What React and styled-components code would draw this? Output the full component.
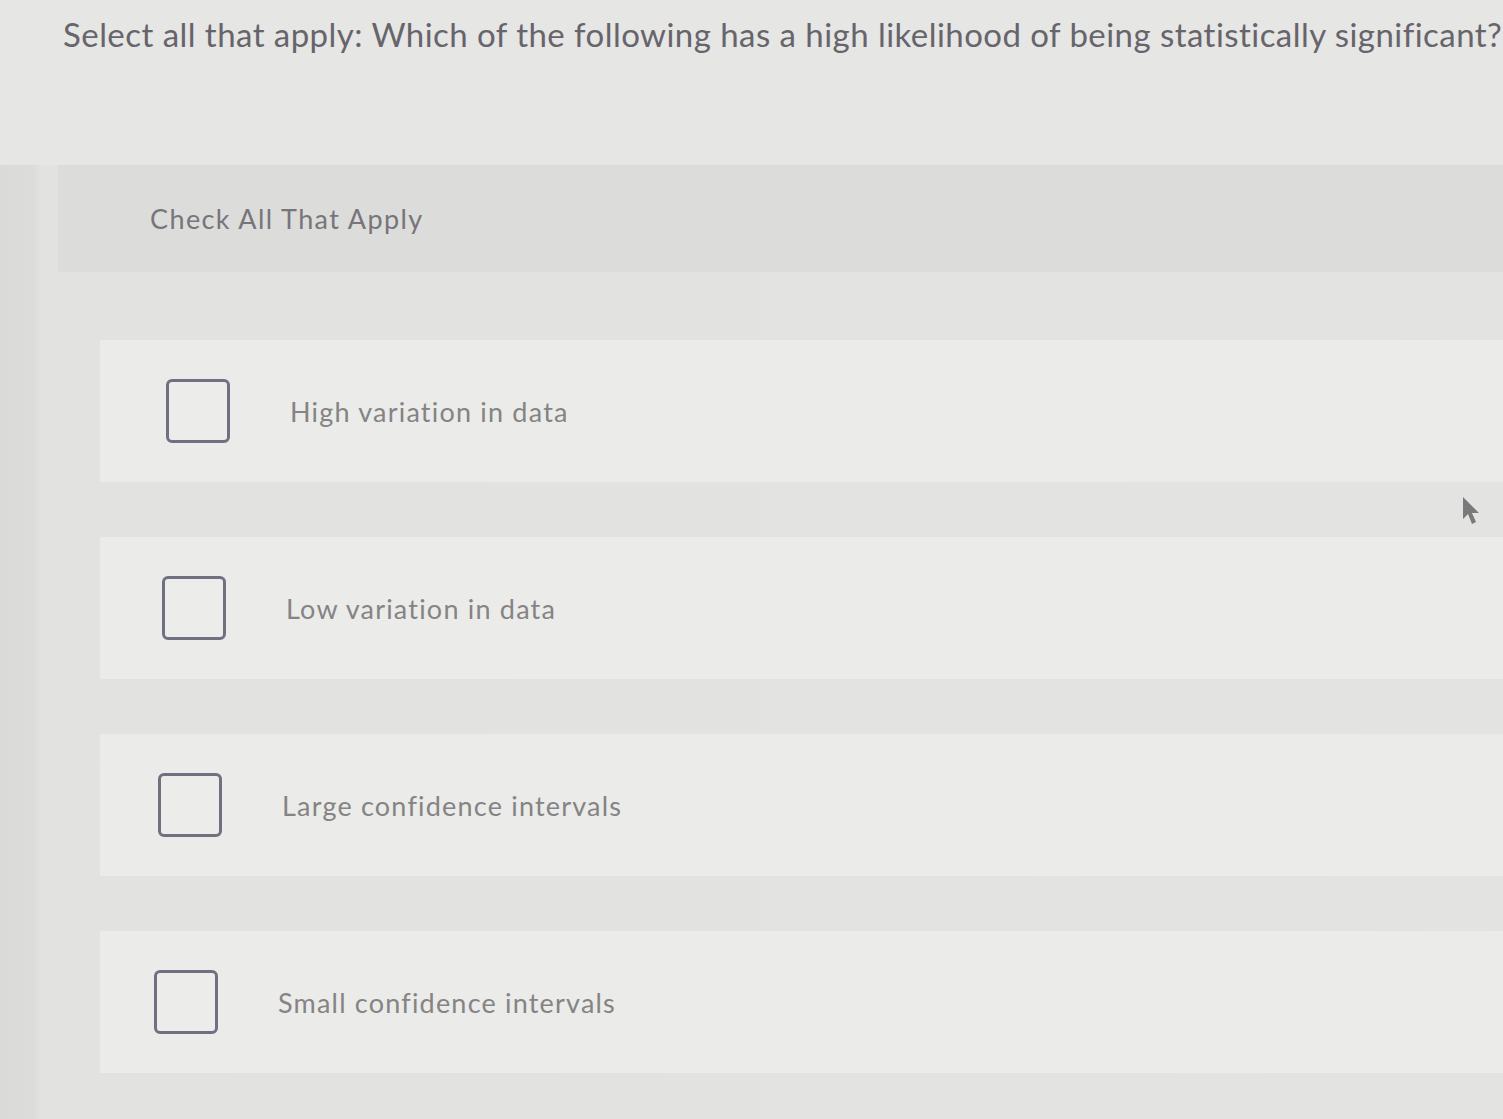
import React from "react";
import styled, { createGlobalStyle } from "styled-components";

const GlobalStyle = createGlobalStyle`
  html, body {
    margin: 0;
    padding: 0;
    background: #e2e2e0;
    font-family: "Lato", "Open Sans", "Liberation Sans", sans-serif;
    overflow: hidden;
  }
`;

const Page = styled.div`
  position: relative;
  width: 1503px;
  height: 1119px;
  overflow: hidden;
  background: linear-gradient(90deg, #dadad8 0px, #dcdcda 34px, #e2e2e0 40px, #e3e3e1 100%);
`;

const Question = styled.div`
  height: 165px;
  box-sizing: border-box;
  padding: 14px 0 0 63px;
  background: #e6e6e4;
  white-space: nowrap;
  font-size: 33px;
  letter-spacing: 0.45px;
  color: #67646b;
`;

const Panel = styled.section`
  margin-left: 58px;
`;

const PanelHeader = styled.div`
  height: 107px;
  box-sizing: border-box;
  display: flex;
  align-items: center;
  padding: 0 0 0 92px;
  background: #dcdcda;
  font-size: 27px;
  letter-spacing: 1.4px;
  color: #77757a;
`;

const OptionList = styled.div`
  display: flex;
  flex-direction: column;
  gap: 55px;
  padding: 68px 0 0 62px;
  margin-left: -20px;
`;

const Option = styled.label`
  display: flex;
  align-items: center;
  gap: 60px;
  height: 142px;
  box-sizing: border-box;
  padding-left: ${(p) => p.$indent}px;
  background: #ebebe9;
  font-size: 27px;
  letter-spacing: 1.2px;
  color: #858384;
  cursor: pointer;
`;

const Box = styled.span`
  width: 58px;
  height: 58px;
  flex: none;
  border: 3px solid #6f7181;
  border-radius: 6px;
  background: #ececea;
`;

const Cursor = styled.svg`
  position: absolute;
  left: 1461px;
  top: 495px;
`;

const options = [
  { text: "High variation in data", indent: 66 },
  { text: "Low variation in data", indent: 62 },
  { text: "Large confidence intervals", indent: 58 },
  { text: "Small confidence intervals", indent: 54 },
];

export default function App() {
  return (
    <Page>
      <GlobalStyle />
      <Question>
        Select all that apply: Which of the following has a high likelihood of
        being statistically significant?
      </Question>
      <Panel>
        <PanelHeader>Check All That Apply</PanelHeader>
        <OptionList>
          {options.map((o) => (
            <Option key={o.text} $indent={o.indent}>
              <Box />
              <span>{o.text}</span>
            </Option>
          ))}
        </OptionList>
      </Panel>
      <Cursor width="22" height="34" viewBox="0 0 22 34">
        <path d="M2 2 L2 24 L7 19 L11 29 L15 27 L11 18 L18 18 Z" fill="#7a7a7c" />
      </Cursor>
    </Page>
  );
}
